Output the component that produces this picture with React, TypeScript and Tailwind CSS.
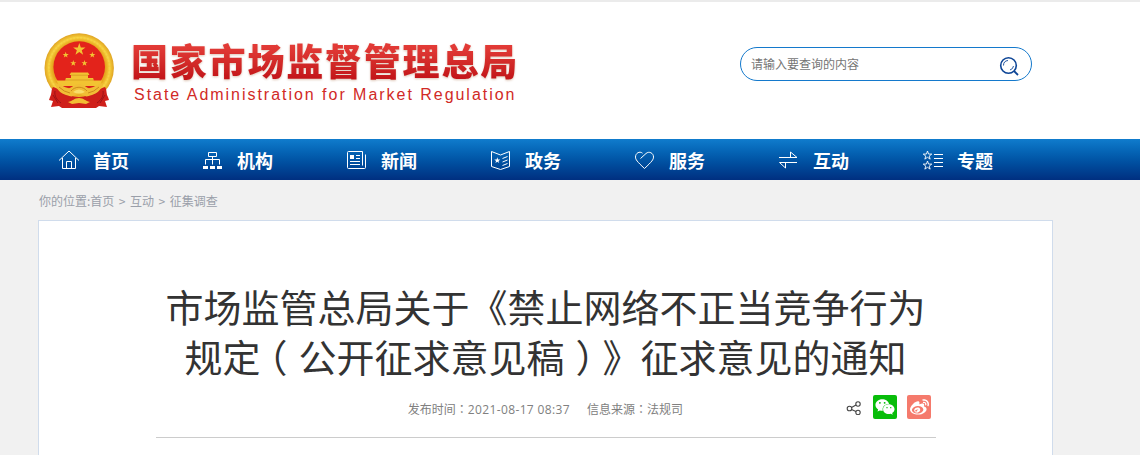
import type { ReactNode } from 'react';
import { FaWeibo, FaWeixin } from 'react-icons/fa';

interface NavItem {
  label: string;
  icon: ReactNode;
}

const STAR = '0,-1 0.235,-0.324 0.951,-0.309 0.38,0.124 0.588,0.809 0,0.4 -0.588,0.809 -0.38,0.124 -0.951,-0.309 -0.235,-0.324';

const navItems: NavItem[] = [
  {
    label: '首页',
    icon: (
      <>
        <path d="M1 11.500 11 2l10 9.500" />
        <path d="M4.500 9v10.500h13V9M8.500 19.500v-7h5v7" />
      </>
    ),
  },
  {
    label: '机构',
    icon: (
      <>
        <path d="M6.500 3.500h8v4h-8zM10.500 7.500v8M3.500 15.500v-5h14v5" />
        <path d="M1 17h5v3H1zM8 17h5v3H8zM15 17h5v3h-5z" fill="currentColor" stroke="none" />
      </>
    ),
  },
  {
    label: '新闻',
    icon: (
      <>
        <path d="M16.500 16.500v-14h-14a1 1 0 0 0-1 1v15a1 1 0 0 0 1 1h16a1 1 0 0 0 1-1v-13" />
        <path d="M10 6.500h4M10 9.500h4M4 12.500h10M4 15.500h10" />
        <path d="M4 6h4v4H4z" fill="currentColor" stroke="none" />
      </>
    ),
  },
  {
    label: '政务',
    icon: (
      <>
        <path d="M1.500 2.500 10.500 6l9-3.500v15l-9 3-9-3z" />
        <path d="m12.500 9.500 5-2M12.500 13l5-2M12.500 16.500l5-2" />
        <polygon points={STAR} transform="translate(7.300 11.500) scale(3.200)" fill="currentColor" stroke="none" />
      </>
    ),
  },
  {
    label: '服务',
    icon: <path d="M6.500 9.500 12 4.500C15 1.800 19.500 4 19.500 8c0 2.500-1.500 4.500-9 11.500C3 12.500 1.500 10.500 1.500 8c0-3.800 4-6.300 7-3.800" />,
  },
  {
    label: '互动',
    icon: <path d="M1 8.500h18L12.500 3v5.500M19 13.500H1.500l6 5.500v-5.500" />,
  },
  {
    label: '专题',
    icon: (
      <>
        <polygon points={STAR} transform="translate(5.500 6.500) scale(4.500)" strokeWidth=".2" />
        <polygon points={STAR} transform="translate(5.500 16.500) scale(4.500)" strokeWidth=".2" />
        <path d="M12 5.500h9M12 9.500h9M12 13.500h9M12 17.500h9" />
      </>
    ),
  },
];

function Emblem() {
  return (
    <svg width="72" height="76" viewBox="0 0 72 76" className="shrink-0">
      <defs>
        <radialGradient id="gold" cx=".5" cy=".5" r=".5">
          <stop offset=".76" stopColor="#e5a51d" />
          <stop offset=".88" stopColor="#f7cf3c" />
          <stop offset="1" stopColor="#dfa322" />
        </radialGradient>
      </defs>
      <circle cx="36.200" cy="35" r="34.700" fill="url(#gold)" />
      <circle cx="36.200" cy="35" r="30.300" fill="none" stroke="#f8dc55" strokeWidth="2" strokeDasharray="2 1.500" opacity=".4" />
      <circle cx="36.200" cy="34" r="25.800" fill="#e3231b" />
      <g fill="#f2c332">
        <polygon points={STAR} transform="translate(36.300 16.500) scale(6.500)" />
        <polygon points={STAR} transform="translate(22.700 22) scale(3.200)" />
        <polygon points={STAR} transform="translate(49.300 22) scale(3.200)" />
        <polygon points={STAR} transform="translate(30.300 30.200) scale(3.200)" />
        <polygon points={STAR} transform="translate(41.500 30.200) scale(3.200)" />
        <path d="M28 39.500h17l1.500 2.500H45v3h5l.5 1v4h-28v-4l.5-1h5v-3h-1.500z" />
        <path d="M13.500 47.500h45.500l-2 5.500H16z" />
      </g>
      <path d="M28 42.200h17M23 47h27" stroke="#cf8a1d" strokeWidth=".6" />
      <path d="M15.500 53h41v3h-41z" fill="#d9211b" />
      <path d="M10 54c-2 2-1 7-3 10l-1 3 4 1-2 6 8-1 3 2h34l3-2 8 1-2-6 4-1-1-3c-2-3-1-8-3-10-6 1-13 10-26 10S16 55 10 54z" fill="#cf1f1a" />
      <path d="M12 58c-1 5 2 9 6 12M60 58c1 5-2 9-6 12M10 62l5 8M62 62l-5 8" stroke="#9c1115" fill="none" />
      <path d="M12 50c6 1 8 4 13 5 3 1 6-4 11-4s8 5 11 4c5-1 7-4 13-5-2 8-6 10-11 12-4 1-5 2-7 1-2-2-10-2-12 0-2 1-3 0-7-1-5-2-9-4-11-12z" fill="#f1bd35" />
      <path d="M28 58c4-5 12-5 16 0M16 54q5 5 11 6M56 54q-5 5-11 6" stroke="#c8831a" strokeWidth=".9" fill="none" />
      <path d="M25 69c5-1 6-4 11-4s6 3 11 4l-4 2-7-1-7 1z" fill="#f2bd32" />
      <path d="M30 59q6-5 12 0-6 3-12 0z" fill="#f9de69" />
    </svg>
  );
}

function SearchBox() {
  return (
    <div className="mt-[47px] flex h-[34px] w-[292px] items-center justify-between rounded-full border border-[#1479cc] pr-3 pl-2.5">
      <span className="text-[12px] text-[#757575]">请输入要查询的内容</span>
      <svg width="20" height="20" viewBox="0 0 20 20" fill="none" stroke="#0d4596" className="mt-1">
        <circle cx="9.500" cy="9.500" r="7.800" strokeWidth="1.600" />
        <path d="M4.500 9.500a5 5 0 0 1 4.500-5M14.500 10a5 5 0 0 1-3.500 4" strokeWidth=".9" />
        <path d="m15 15 4 4" strokeWidth="1.800" />
      </svg>
    </div>
  );
}

function ShareIcon() {
  return (
    <svg width="16" height="16" viewBox="0 0 16 16" fill="none" stroke="#444" strokeWidth="1.100">
      <circle cx="3.500" cy="9.500" r="2.300" />
      <circle cx="12" cy="5" r="2.200" />
      <circle cx="12" cy="13.500" r="2.200" />
      <path d="m5.500 8.500 4.500-2.500M5.500 10.500l4.500 2" />
    </svg>
  );
}

// full-width colon centred in its cell
function Colon() {
  return (
    <span lang="zh-TW" className="inline-block font-['Noto_Sans_CJK_TC',sans-serif]">
      ：
    </span>
  );
}

export default function App() {
  return (
    <div className="h-[455px] overflow-hidden bg-[#f1f1f1] font-['Noto_Sans_CJK_SC',sans-serif] [text-spacing-trim:space-all]">
      <header className="h-[139px] bg-white">
        <div className="flex h-full border-t-2 border-[#ebebeb] pl-[43px]">
          <div className="mt-[31px]">
            <Emblem />
          </div>
          <div className="mt-[36px] ml-[16px] w-[609px] whitespace-nowrap">
            <div className="bg-gradient-to-b from-[#e23a36] from-20% to-[#c4161a] to-90% bg-clip-text text-[37px] leading-[44px] font-black tracking-[1.8px] text-transparent drop-shadow-[0_1px_1px_rgba(170,110,70,0.4)]">
              国家市场监督管理总局
            </div>
            <div className="mt-[4px] ml-[3px] font-['Liberation_Sans',sans-serif] text-[16px] leading-[18px] tracking-[1.97px] text-[#d12a26]">
              State Administration for Market Regulation
            </div>
          </div>
          <div className="-mt-[2px]">
            <SearchBox />
          </div>
        </div>
      </header>

      <nav className="flex h-[41px] bg-gradient-to-b from-[#107ccd] to-[#002f80] pl-[58px] text-white">
        {navItems.map((item) => (
          <a key={item.label} className="flex w-[144px] items-center">
            <svg width="22" height="22" viewBox="0 0 22 22" fill="none" stroke="currentColor" className="shrink-0">
              {item.icon}
            </svg>
            <span className="ml-[13px] pt-[2px] text-[18px] leading-[39px] font-bold">{item.label}</span>
          </a>
        ))}
      </nav>

      <div className="flex h-10 items-center gap-[4.5px] pt-px pl-[39px] text-[12px] text-[#9a9fa9]">
        <span>你的位置:首页</span>
        <span>&gt;</span>
        <span>互动</span>
        <span>&gt;</span>
        <span>征集调查</span>
      </div>

      <main className="ml-[38px] h-[300px] w-[1015px] border border-[#d0dcec] bg-white pt-[60px] pr-[116px] pl-[117px]">
        <h1 className="-ml-px text-center text-[38px] leading-[50px] whitespace-nowrap text-[#333]">
          市场监管总局关于《禁止网络不正当竞争行为
          <br />
          规定<span className="-ml-[11px] mr-[11px] inline-block">（</span>公开征求意见稿
          <span className="ml-[11px] -mr-[11px] inline-block">）</span>》征求意见的通知
        </h1>
        <div className="flex h-[57px] justify-end border-b border-[#ccc] pr-[5px]">
          <div className="mt-[18px] mr-[163px] flex gap-[17px] text-[12px] leading-[20px] text-[#808080]">
            <span>
              发布时间
              <Colon />
              <span className="font-['Open_Sans',sans-serif] tracking-[0.36px]">2021-08-17 08:37</span>
            </span>
            <span>
              信息来源
              <Colon />
              法规司
            </span>
          </div>
          <div className="mt-[14px] flex h-6 items-center">
            <ShareIcon />
            <span className="ml-[11px] flex size-6 items-center justify-center rounded-[2px] bg-[#08bd0a] text-white">
              <FaWeixin size={20} />
            </span>
            <span className="ml-[10px] flex size-6 items-center justify-center rounded-[2px] bg-[#f57a6c] text-white">
              <FaWeibo size={19} />
            </span>
          </div>
        </div>
      </main>
    </div>
  );
}
